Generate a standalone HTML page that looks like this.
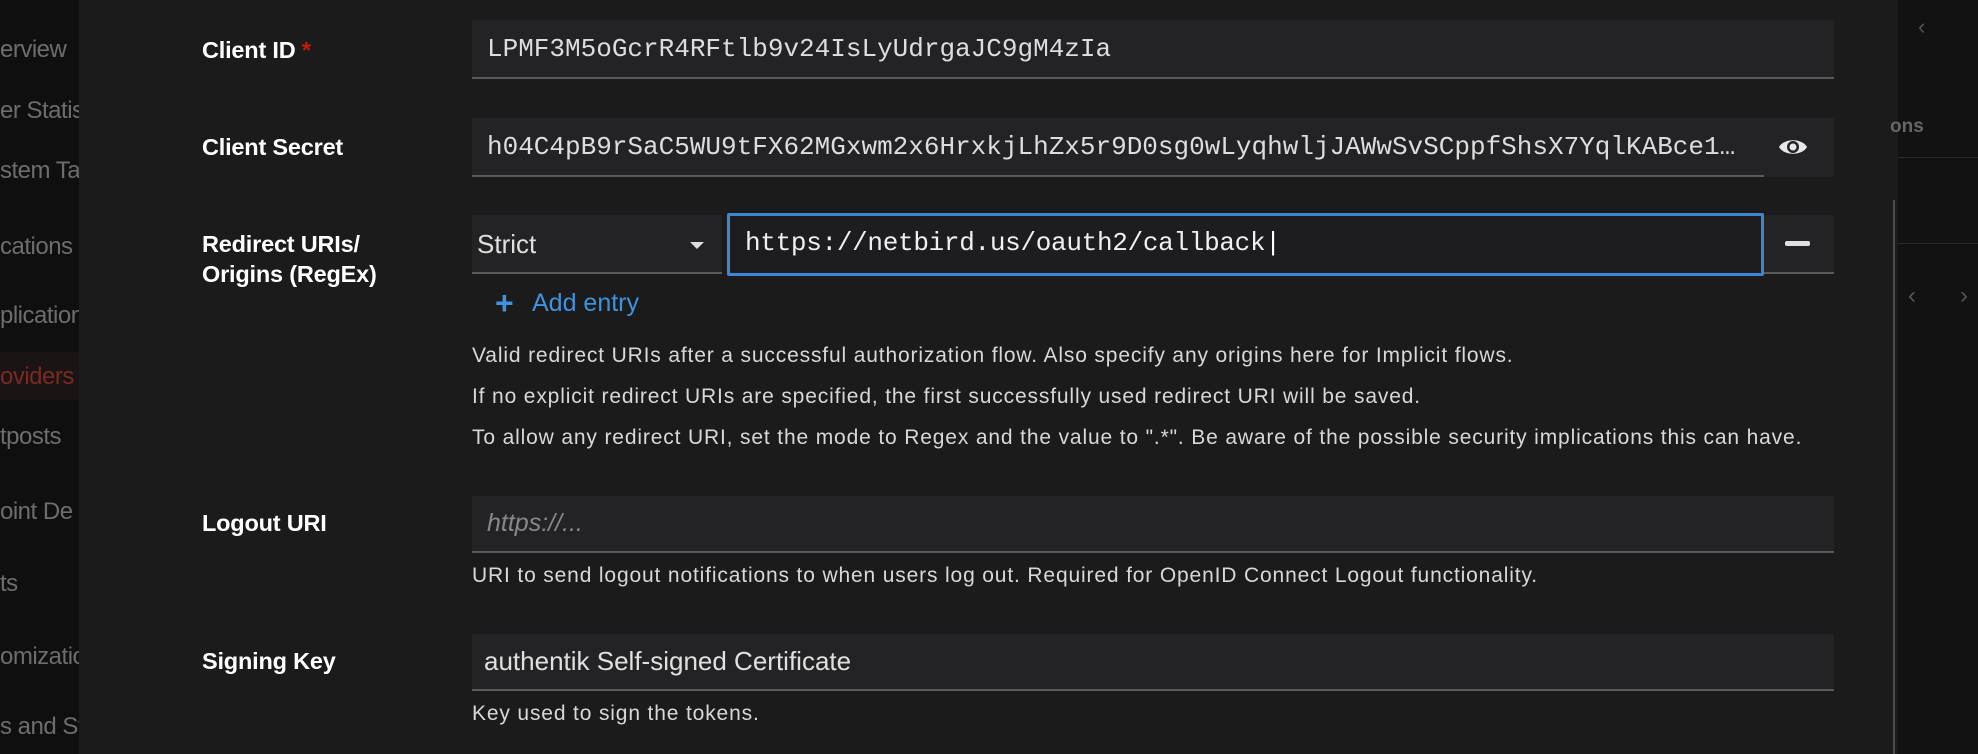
<!DOCTYPE html>
<html><head><meta charset="utf-8"><style>
*{margin:0;padding:0;box-sizing:border-box}
body{width:1978px;height:754px;overflow:hidden;background:#1b1b1c;font-family:"Liberation Sans",sans-serif;position:relative;color:#e6e6e6}
.side{position:absolute;left:0;top:0;width:79px;height:754px;background:#0f0f10;overflow:hidden}
.side div{position:absolute;left:0;white-space:nowrap;font-size:24px;color:#6d6d6d;letter-spacing:-0.5px}
.right{position:absolute;left:1898px;top:0;width:80px;height:754px;background:#121213}
.lbl{position:absolute;left:202px;font-weight:bold;font-size:23.5px;color:#fff;letter-spacing:-0.2px;line-height:30px}
.inp{position:absolute;background:#232325;border-bottom:2px solid #5a5a5c}
.mono{font-family:"Liberation Mono",monospace;font-size:26px;color:#ddd;position:absolute;white-space:nowrap}
.help{position:absolute;left:472px;font-size:21px;color:#d8d8d8;white-space:nowrap;letter-spacing:0.85px}
</style></head><body>
<div class="side">
<div style="top:36px">erview</div>
<div style="top:97px">er Statis</div>
<div style="top:157px">stem Tas</div>
<div style="top:233px">cations</div>
<div style="top:302px">plication</div>
<div style="top:352px;height:48px;width:79px;background:#1a1414"></div>
<div style="top:363px;color:#7a2a22">oviders</div>
<div style="top:423px">tposts</div>
<div style="top:498px">oint De</div>
<div style="top:570px">ts</div>
<div style="top:643px">omizatio</div>
<div style="top:713px">s and St</div>
</div>
<div class="right">
<div style="position:absolute;left:20px;top:14px;color:#555;font-size:22px">‹</div>
<div style="position:absolute;left:-8px;top:116px;color:#666;font-weight:bold;font-size:19px">ons</div>
<div style="position:absolute;left:0;top:157px;width:80px;height:1px;background:#2a2a2a"></div>
<div style="position:absolute;left:0;top:243px;width:80px;height:1px;background:#2a2a2a"></div>
<div style="position:absolute;left:10px;top:282px;color:#555;font-size:24px">‹</div>
<div style="position:absolute;left:62px;top:282px;color:#555;font-size:24px">›</div>
</div>
<div style="position:absolute;left:1893px;top:200px;width:2px;height:554px;background:#4a4a4a"></div>

<div class="lbl" style="top:35px">Client ID <span style="color:#c9190b">*</span></div>
<div class="inp" style="left:472px;top:20px;width:1362px;height:59px"></div>
<div class="mono" style="left:487px;top:34px">LPMF3M5oGcrR4RFtlb9v24IsLyUdrgaJC9gM4zIa</div>

<div class="lbl" style="top:132px">Client Secret</div>
<div class="inp" style="left:472px;top:118px;width:1362px;height:59px"></div>
<div class="mono" style="left:487px;top:132px">h04C4pB9rSaC5WU9tFX62MGxwm2x6HrxkjLhZx5r9D0sg0wLyqhwljJAWwSvSCppfShsX7YqlKABce1…</div>
<div style="position:absolute;left:1764px;top:118px;width:70px;height:59px;background:#232325"></div>
<svg style="position:absolute;left:1778px;top:136px" width="30" height="22" viewBox="0 0 30 22"><path d="M1 11 C6 2 24 2 29 11 C24 20 6 20 1 11Z" fill="#e8e8e8"/><circle cx="15" cy="11" r="6" fill="#232325"/><circle cx="15" cy="11" r="3.5" fill="#e8e8e8"/></svg>

<div class="lbl" style="top:229px">Redirect URIs/<br>Origins (RegEx)</div>
<div class="inp" style="left:472px;top:215px;width:250px;height:59px"></div>
<div style="position:absolute;left:477px;top:229px;font-size:26px;color:#e0e0e0">Strict</div>
<div style="position:absolute;left:690px;top:242px;border-left:7px solid transparent;border-right:7px solid transparent;border-top:7px solid #ddd"></div>
<div style="position:absolute;left:727px;top:213px;width:1037px;height:63px;background:#1d1d1f;border:3px solid #3c86d8;border-radius:2px"></div>
<div class="mono" style="left:745px;top:228px;color:#f0f0f0;letter-spacing:-0.3px">https://netbird.us/oauth2/callback<span style="color:#fff">|</span></div>
<div class="inp" style="left:1764px;top:215px;width:70px;height:59px"></div>
<div style="position:absolute;left:1785px;top:241px;width:25px;height:5px;background:#e0e0e0;border-radius:2px"></div>
<div style="position:absolute;left:495px;top:285px;font-size:32px;color:#3d93df;font-weight:bold">+</div>
<div style="position:absolute;left:532px;top:289px;font-size:25px;color:#3d93df">Add entry</div>
<div class="help" style="top:344px">Valid redirect URIs after a successful authorization flow. Also specify any origins here for Implicit flows.</div>
<div class="help" style="top:385px">If no explicit redirect URIs are specified, the first successfully used redirect URI will be saved.</div>
<div class="help" style="top:426px">To allow any redirect URI, set the mode to Regex and the value to ".*". Be aware of the possible security implications this can have.</div>

<div class="lbl" style="top:508px">Logout URI</div>
<div class="inp" style="left:472px;top:496px;width:1362px;height:57px"></div>
<div style="position:absolute;left:487px;top:509px;font-size:25px;color:#888;font-style:italic">https://...</div>
<div class="help" style="top:564px">URI to send logout notifications to when users log out. Required for OpenID Connect Logout functionality.</div>

<div class="lbl" style="top:646px">Signing Key</div>
<div class="inp" style="left:472px;top:634px;width:1362px;height:57px"></div>
<div style="position:absolute;left:484px;top:646px;font-size:26px;color:#e0e0e0">authentik Self-signed Certificate</div>
<div class="help" style="top:702px">Key used to sign the tokens.</div>
</body></html>
